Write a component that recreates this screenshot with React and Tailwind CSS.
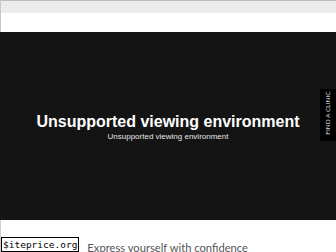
import React from 'react';

function App() {
  return (
    <div className="relative h-[252px] w-[336px] overflow-hidden bg-white font-['Liberation_Sans',Arial,sans-serif]">
      <div className="flex h-[32px] flex-col border-l border-[#c8c8c8]">
        <div className="h-[1px] bg-[#bdbdbd]" />
        <div className="h-[12px] bg-[#ececec]" />
        <div className="flex-1 bg-white" />
      </div>

      <section className="relative flex h-[188px] flex-col items-center bg-[#141414] pt-[80px] text-white">
        <h1 className="text-[16px] font-bold leading-[19px]">Unsupported viewing environment</h1>
        <p className="mt-[1px] text-[8px] leading-[10px] text-[#e5e5e5]">Unsupported viewing environment</p>

        <div className="absolute right-0 top-[57px] flex h-[52px] w-[16px] items-start justify-center bg-black">
          <span className="mt-[4px] flex h-[40px] w-[8px] items-center justify-center">
            <span className="-rotate-90 whitespace-nowrap font-['Lato','Noto_Sans',sans-serif] text-[6.5px] leading-[8px] text-[#d8d8d8]">
              FIND A CLINIC
            </span>
          </span>
        </div>
      </section>

      <div className="flex h-[32px] items-end border-l border-[#d0d0d0]">
        <div className="flex items-end gap-[8px]">
          <span className="border border-black px-[1px] font-['DejaVu_Sans_Mono',monospace] text-[9.5px] leading-[13px] text-black">
            $iteprice.org
          </span>
          <span className="mb-[-3px] font-['Lato','Noto_Sans',sans-serif] text-[11.2px] leading-[14px] text-[#555]">
            Express yourself with confidence
          </span>
        </div>
      </div>
    </div>
  );
}

export default App;
